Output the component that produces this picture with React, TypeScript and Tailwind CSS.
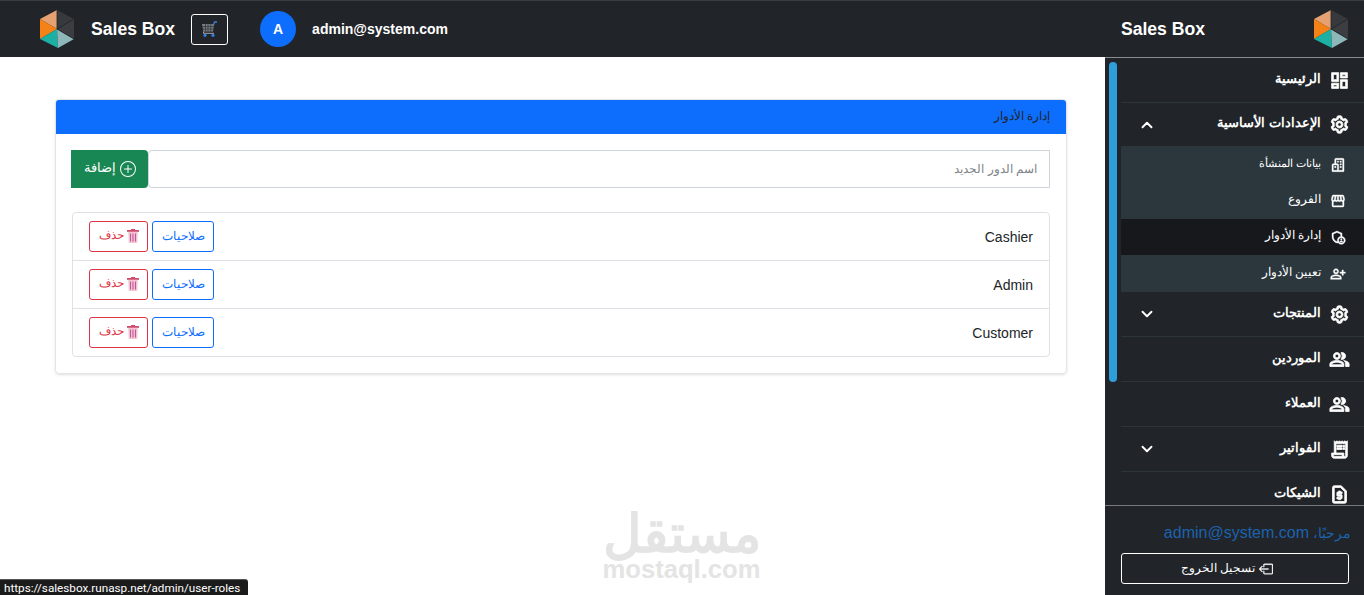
import React from "react";
import {
  MdOutlineDashboard,
  MdOutlinePeopleAlt,
  MdOutlineStorefront,
  MdOutlinePersonAddAlt,
  MdOutlineReceiptLong,
  MdOutlineRequestPage,
  MdOutlineAdminPanelSettings,
} from "react-icons/md";
import { BiCog, BiBuildings } from "react-icons/bi";
import { BsBoxArrowLeft, BsChevronDown, BsChevronUp, BsPlusCircle } from "react-icons/bs";

const Logo = () => (
  <svg width="36" height="40" viewBox="0 0 36 40" className="shrink-0">
    <polygon points="18,1 1,10 18,20" fill="#e5a172" />
    <polygon points="1,10 1,30 18,20" fill="#f58216" />
    <polygon points="1,30 19,39 18,20" fill="#1cb0a5" />
    <polygon points="18,20 19,39 35,30" fill="#8db7b9" />
    <polygon points="18,1 35,10 18,20" fill="#38393d" />
    <polygon points="35,10 35,30 18,20" fill="#3c3d41" />
    <path d="M18 20 35 10M18 20 35 30M18 1V20" stroke="#212529" strokeWidth="0.8" />
  </svg>
);

const Cart = () => (
  <svg width="17" height="16" viewBox="0 0 17 16">
    <path d="M1 3h12l-1 7.500H2.500z" fill="#7b7f83" />
    <path d="M1.500 5.500h11M2 8h10.500M4.500 3v7.500M7 3v7.500M9.800 3v7.500" stroke="#33373c" strokeWidth="0.8" />
    <path d="M12.500 4l1-3h2.500" stroke="#3d7fd0" strokeWidth="1.300" fill="none" />
    <path d="M2.500 10.500v1.800h10.500" stroke="#a4a8ac" strokeWidth="1" fill="none" />
    <circle cx="4" cy="14.300" r="1.600" fill="#2f7fdc" />
    <circle cx="12" cy="14.300" r="1.600" fill="#2f7fdc" />
  </svg>
);

const Trash = () => (
  <svg width="12" height="14" viewBox="0 0 12 14" className="shrink-0">
    <rect x="0" y="1" width="12" height="1.800" fill="#cf4a6c" />
    <rect x="4" y="0" width="4" height="1.200" fill="#cf4a6c" />
    <path d="M1.200 3h9.600l-.6 11H1.800z" fill="#f3c6d2" />
    <path d="M3.500 4.500v8M6 4.500v8M8.500 4.500v8" stroke="#c0569a" strokeWidth="1.100" />
  </svg>
);

type MenuItem = {
  label: string;
  icon: React.ReactNode;
  chevron?: "up" | "down";
};

// the material icons carry an invisible box path, it must not pick up the stroke
const mainIcon = "text-[21px] shrink-0 stroke-[0.9] [&_path[fill=none]]:stroke-none";
const subIcon = "text-[16px] shrink-0 stroke-[0.6] [&_path[fill=none]]:stroke-none";

const topMenu: MenuItem[] = [
  { label: "الرئيسية", icon: <MdOutlineDashboard className={mainIcon} /> },
  { label: "الإعدادات الأساسية", icon: <BiCog className={mainIcon} />, chevron: "up" },
];

const subMenu = [
  { label: "بيانات المنشأة", icon: <BiBuildings className={subIcon} /> },
  { label: "الفروع", icon: <MdOutlineStorefront className={subIcon} /> },
  { label: "إدارة الأدوار", icon: <MdOutlineAdminPanelSettings className={subIcon} />, active: true },
  { label: "تعيين الأدوار", icon: <MdOutlinePersonAddAlt className={subIcon} /> },
];

const bottomMenu: MenuItem[] = [
  { label: "المنتجات", icon: <BiCog className={mainIcon} />, chevron: "down" },
  { label: "الموردين", icon: <MdOutlinePeopleAlt className={mainIcon} /> },
  { label: "العملاء", icon: <MdOutlinePeopleAlt className={mainIcon} /> },
  { label: "الفواتير", icon: <MdOutlineReceiptLong className={mainIcon} />, chevron: "down" },
  { label: "الشيكات", icon: <MdOutlineRequestPage className={mainIcon} /> },
];

const roles = ["Cashier", "Admin", "Customer"];

const MenuRow = ({ item, short }: { item: MenuItem; short?: boolean }) => (
  <div
    className={`flex shrink-0 items-center border-b border-[#2c3539] pr-[15px] pl-[20px] text-white ${short ? "h-[44px]" : "h-[45px]"}`}
  >
    <span className="flex w-[20px] justify-center">{item.icon}</span>
    <span className="mr-[8px] pb-[3px] text-[12.8px] font-bold">{item.label}</span>
    {item.chevron === "up" && <BsChevronUp className="mr-auto text-[12px] stroke-[1.5]" />}
    {item.chevron === "down" && <BsChevronDown className="mr-auto text-[12px] stroke-[1.5]" />}
  </div>
);

export default function App() {
  return (
    <div className="relative flex h-[595px] w-[1364px] overflow-hidden bg-white font-['Liberation_Sans',sans-serif] text-[#212529]">
      {/* left side */}
      <div className="flex w-[1105px] flex-col">
        <header className="flex h-[57px] shrink-0 items-center border-t border-[#3a3d40] bg-[#212529] pl-[39px] text-white">
          <Logo />
          <span className="ml-[16px] text-[17.6px] font-bold">Sales Box</span>
          <button className="ml-[16px] flex h-[31px] w-[37px] items-center justify-center rounded-[3px] border border-white">
            <Cart />
          </button>
          <span className="ml-[32px] flex h-[36px] w-[36px] items-center justify-center rounded-full bg-[#0d6efd] text-[14px] font-bold">
            A
          </span>
          <span className="ml-[16px] text-[14px] font-bold">admin@system.com</span>
        </header>

        <main className="pt-[42px] pr-[38px] pl-[55px]" dir="rtl">
          <div className="overflow-hidden rounded-[4px] border border-[#e3e5e7] shadow-sm">
            <div className="flex h-[34px] items-center bg-[#0d6efd] px-[16px] pb-[2px] text-[12px]">إدارة الأدوار</div>
            <div className="pt-[16px] pr-[16px] pb-[16px] pl-[15px]">
              <div className="flex h-[38px]">
                <input
                  placeholder="اسم الدور الجديد"
                  className="min-w-0 flex-1 rounded-l-[4px] border border-[#ced4da] px-[12px] pb-[1px] text-[12px] placeholder:text-[#7d8389]"
                />
                <button className="flex w-[77px] items-center justify-center gap-[4px] rounded-r-[4px] bg-[#198754] pb-[1px] text-[12.5px] font-normal text-white">
                  <BsPlusCircle className="text-[16px]" />
                  إضافة
                </button>
              </div>
              <ul className="mt-[24px] ml-[1px] rounded-[4px] border border-[#dee2e6]">
                {roles.map((role, i) => (
                  <li
                    key={role}
                    className={`flex items-center justify-between px-[16px] ${i > 0 ? "h-[48px] border-t border-[#dee2e6]" : "h-[47px]"}`}
                  >
                    <span dir="ltr" className="pt-[2px] text-[14px]">{role}</span>
                    <div className="flex gap-[4px]" dir="ltr">
                      <button
                        className="flex h-[31px] w-[59px] items-center justify-center gap-[3px] rounded-[3px] border border-[#dc3545] pb-[2px] text-[11.5px] text-[#dc3545]"
                        dir="rtl"
                      >
                        <Trash />
                        حذف
                      </button>
                      <button className="h-[31px] w-[62px] rounded-[3px] border border-[#0d6efd] pb-[2px] text-[12px] text-[#0d6efd]">
                        صلاحيات
                      </button>
                    </div>
                  </li>
                ))}
              </ul>
            </div>
          </div>
        </main>
      </div>

      {/* sidebar */}
      <aside className="relative flex w-[259px] flex-col bg-[#212529] text-white" dir="rtl">
        <div className="flex h-[58px] shrink-0 items-center border-t border-b border-t-[#3a3d40] border-b-[#8a8c8e] pr-[15px]">
          <Logo />
          <span className="mr-[108px] text-[17.6px] font-bold" dir="ltr">Sales Box</span>
        </div>
        <nav className="ml-[16px] flex flex-1 flex-col overflow-hidden">
          {topMenu.map((item, i) => (
            <MenuRow key={item.label} item={item} short={i === 1} />
          ))}
          {subMenu.map((item, i) => (
            <div
              key={item.label}
              className={`flex shrink-0 items-center pr-[17px] ${i === 3 ? "h-[37px]" : "h-[36px]"} ${item.active ? "bg-[#16181c]" : "bg-[#2b373d]"}`}
            >
              <span className="flex w-[18px] justify-center">{item.icon}</span>
              <span className={`mr-[8px] pb-[2px] ${i === 0 ? "text-[10.5px]" : "text-[11.5px]"}`}>{item.label}</span>
            </div>
          ))}
          {bottomMenu.map((item) => (
            <MenuRow key={item.label} item={item} />
          ))}
        </nav>
        <div className="h-[90px] shrink-0 border-t border-[#77797c] pt-[17px] pr-[15px] pl-[16px]">
          <p className="-mr-[2px] flex items-center gap-[4px] text-[16px] leading-[20px] text-[#1c62ad]">
            <span className="text-[14px]">مرحبًا،</span>
            <span dir="ltr">admin@system.com</span>
          </p>
          <button className="mt-[10px] flex h-[31px] w-full items-center justify-center gap-[4px] rounded-[3px] border border-white pr-[16px] text-[11.5px]">
            <BsBoxArrowLeft className="text-[14px] stroke-[0.4]" />
            تسجيل الخروج
          </button>
        </div>
        {/* scrollbar thumb */}
        <div className="absolute top-[62px] left-[4px] h-[320px] w-[8px] rounded-full bg-[#2f9fdc]" />
      </aside>

      {/* watermark */}
      <div className="absolute top-[508px] left-[603px] flex w-[157px] flex-col items-center text-[#e4e4e4]">
        <span className="text-[53px] leading-[52px] font-bold">مستقل</span>
        <span className="text-[25.6px] leading-[18px] font-bold">mostaql.com</span>
      </div>

      {/* link status bubble */}
      <div className="absolute bottom-0 left-0 h-[16px] w-[248px] rounded-tr-[3px] border-t border-[#555] bg-[#1b1b1b] pl-[4px] font-['Roboto',sans-serif] text-[11.7px] leading-[16px] whitespace-nowrap text-white">
        https://salesbox.runasp.net/admin/user-roles
      </div>
    </div>
  );
}
